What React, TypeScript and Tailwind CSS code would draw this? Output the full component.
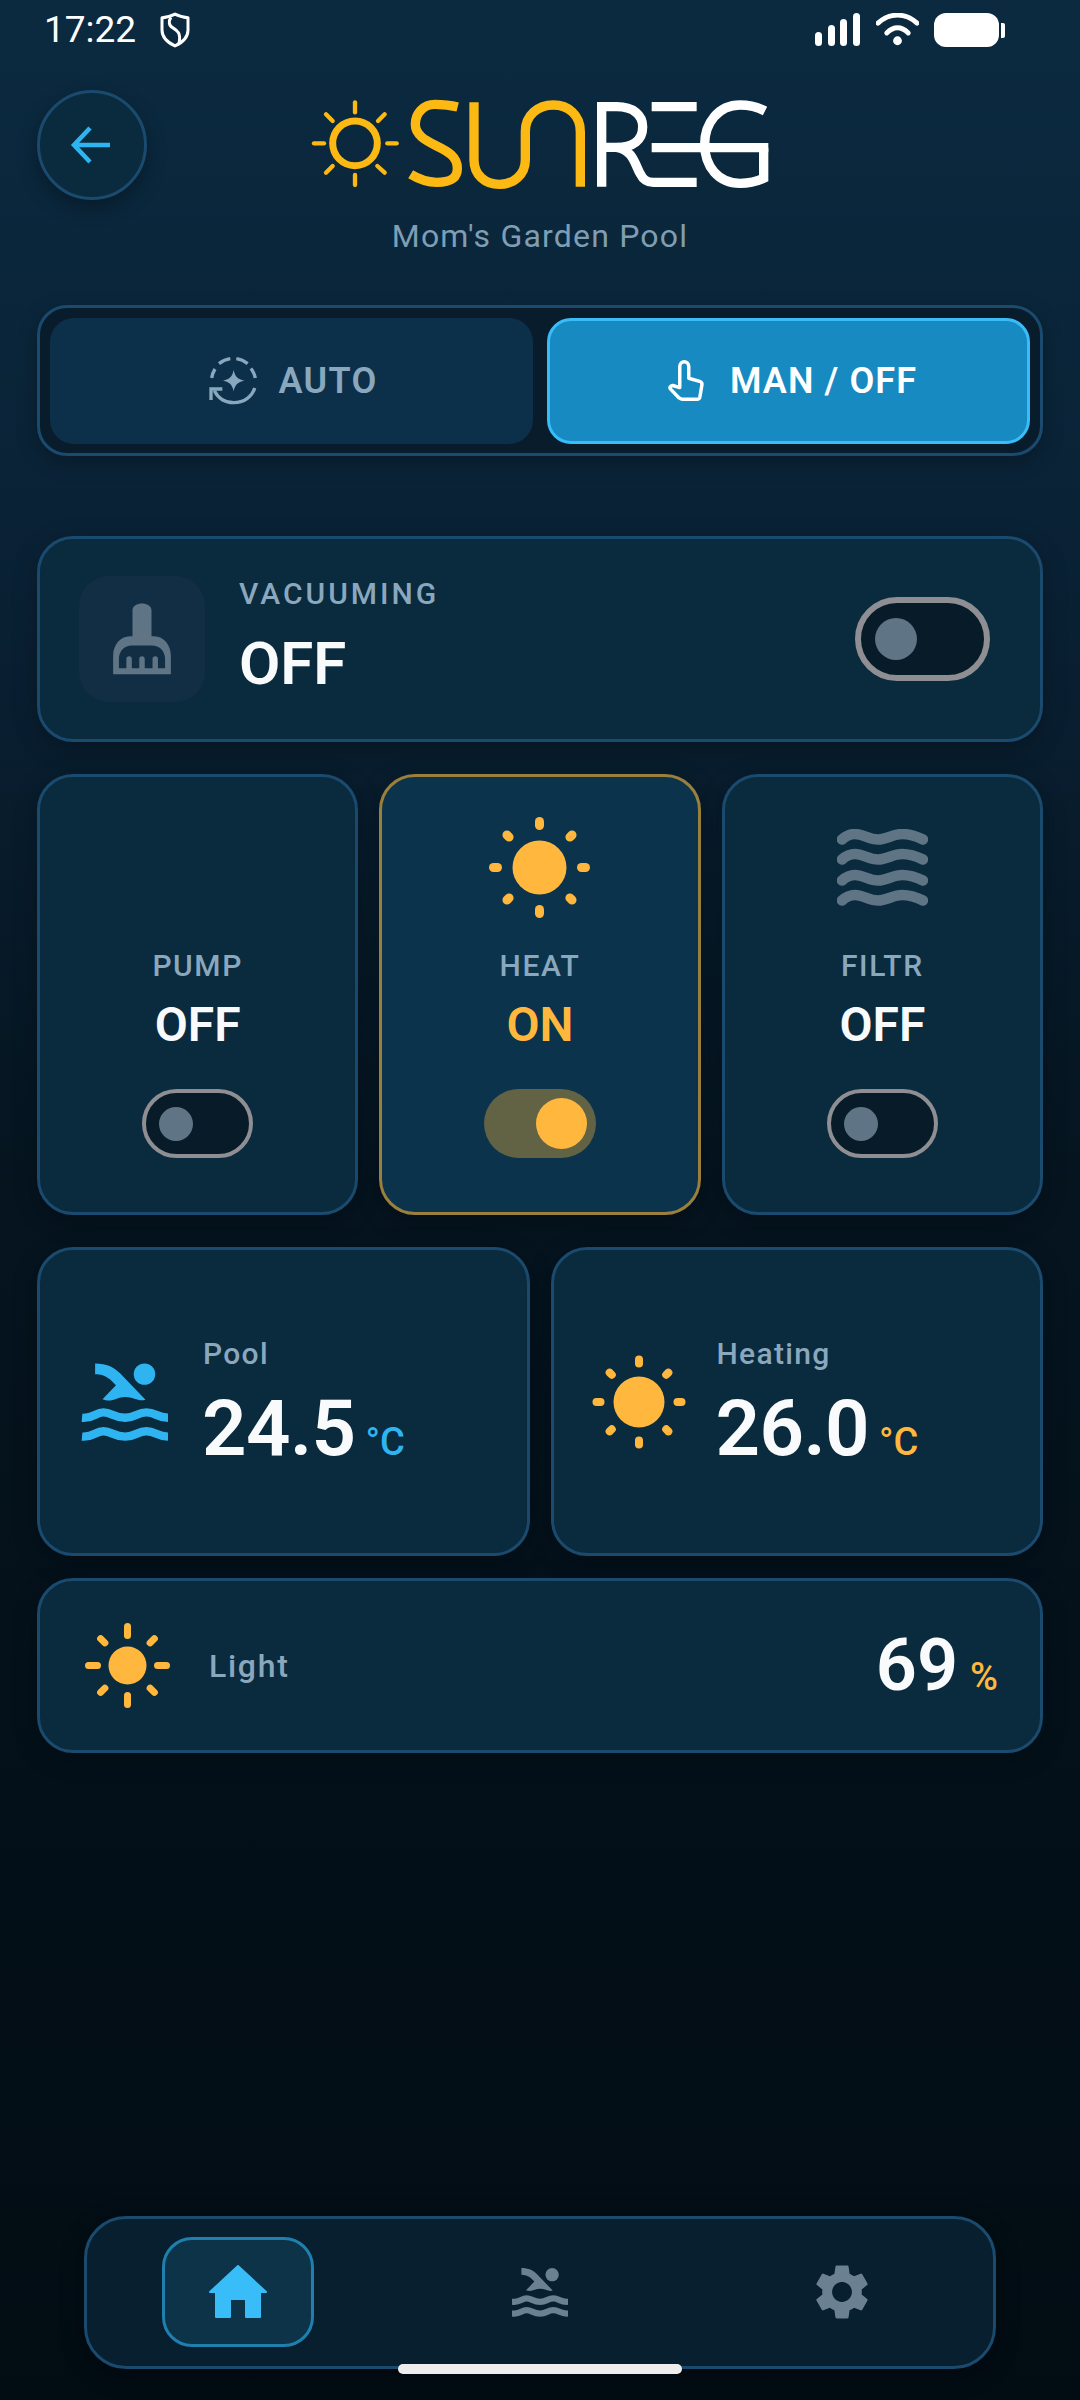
import React from "react";
import { MdSettings } from "react-icons/md";

const FONT = "font-['Roboto',sans-serif]";

function Sun({ w, r, cardinal, diag, sw, color = "#ffb83d" }: { w: number; r: number; cardinal: [number, number]; diag: [number, number]; sw: number; color?: string }) {
  const c = w / 2;
  const k = Math.SQRT1_2;
  const lines: [number, number, number, number][] = [
    [0, -1, 0, -1], [0, 1, 0, 1], [-1, 0, -1, 0], [1, 0, 1, 0],
  ];
  const dl: [number, number][] = [[k, k], [-k, k], [k, -k], [-k, -k]];
  return (
    <svg width={w} height={w} viewBox={`0 0 ${w} ${w}`} fill="none" className="shrink-0">
      <circle cx={c} cy={c} r={r} fill={color} />
      {lines.map((l, i) => (
        <line key={i} x1={c + l[0] * cardinal[0]} y1={c + l[1] * cardinal[0]} x2={c + l[0] * cardinal[1]} y2={c + l[1] * cardinal[1]} stroke={color} strokeWidth={sw} strokeLinecap="round" />
      ))}
      {dl.map((d, i) => (
        <line key={i} x1={c + d[0] * diag[0]} y1={c + d[1] * diag[0]} x2={c + d[0] * diag[1]} y2={c + d[1] * diag[1]} stroke={color} strokeWidth={sw} strokeLinecap="round" />
      ))}
    </svg>
  );
}

function Swim({ w, h, color, round }: { w: number; h: number; color: string; round?: boolean }) {
  const cap = round ? "round" : "butt";
  const sw = round ? 30 : 25;
  return (
    <svg width={w} height={h} viewBox="30 36 268 238" fill="none" className="shrink-0">
      <path d="M75 40 C110 40 130 50 150 70 L225 148 C205 155 190 140 165 140 C140 140 125 158 97 147 L137 105 L120 88 C105 75 90 72 75 72 Z" fill={color} />
      <circle cx="222" cy="72" r="32" fill={color} />
      <path d="M36 202 C70 205 75 186 100 186 C125 186 130 202 165 202 C195 202 200 186 228 186 C255 186 260 202 292 202" stroke={color} strokeWidth={sw} strokeLinecap={cap} />
      <path d="M36 258 C70 261 75 242 100 242 C125 242 130 258 165 258 C195 258 200 242 228 242 C255 242 260 258 292 258" stroke={color} strokeWidth={sw} strokeLinecap={cap} />
    </svg>
  );
}

function Logo() {
  const Y = "#fdb913";
  return (
    <svg width={480} height={120} viewBox="0 0 1440 360" fill="none">
      <g stroke={Y} strokeLinecap="round" strokeWidth="13">
        <line x1="165" y1="52" x2="165" y2="82" />
        <line x1="165" y1="270" x2="165" y2="300" />
        <line x1="42" y1="175" x2="72" y2="175" />
        <line x1="262" y1="175" x2="290" y2="175" />
        <line x1="78" y1="88" x2="98" y2="108" />
        <line x1="254" y1="88" x2="234" y2="108" />
        <line x1="78" y1="263" x2="98" y2="243" />
        <line x1="254" y1="263" x2="232" y2="243" />
      </g>
      <circle cx="165" cy="175" r="67" stroke={Y} strokeWidth="21" />
      <path d="M473 66 C450 60 425 58 405 58 C370 58 346 85 346 118 C346 150 375 165 410 183 C445 200 472 215 472 250 C472 285 445 292 410 292 C385 292 355 282 332 268" stroke={Y} strokeWidth="28" />
      <path d="M522 52 V225 C522 270 555 298 598 298 C640 298 676 270 676 225 V140 C676 90 715 60 760 60 C805 60 841 90 841 140 V305" stroke={Y} strokeWidth="28" />
      <g stroke="#ffffff" strokeWidth="28">
        <path d="M905 305 V65 H950 C1000 65 1028 90 1028 125 C1028 165 1000 187 950 187 H905" />
        <path d="M950 187 C1000 195 1005 240 1020 265 C1030 285 1040 292 1060 292 H1190" />
        <path d="M1055 65 H1190" />
        <path d="M1055 188 H1405" />
        <path d="M1395 78 C1370 65 1345 60 1320 60 C1255 60 1214 115 1214 178 C1214 245 1255 295 1320 295 C1345 295 1370 290 1391 280 V188" />
      </g>
    </svg>
  );
}

function AutoIcon() {
  const c = "#8aa8bd";
  return (
    <svg width={50} height={50} viewBox="53 48 150 150" fill="none" className="shrink-0">
      <g stroke={c} strokeWidth="10">
        <path d="M64 114 C66 102 69 95 74 87" />
        <path d="M86 71 C95 64 106 58 120 56" />
        <path d="M138 56 C151 58 162 63 172 71" />
        <path d="M182 85 C189 95 193 104 195 114" />
        <path d="M193 144 C186 170 160 188 130 188 C104 188 84 175 72 152" />
        <path d="M62 180 V147 H96" />
      </g>
      <path d="M130 90 C134 110 142 118 162 122 C142 126 134 134 130 154 C126 134 118 126 98 122 C118 118 126 110 130 90Z" fill={c} />
    </svg>
  );
}

function HandIcon() {
  return (
    <svg width={38} height={44} viewBox="53 60 110 126" fill="none" className="shrink-0">
      <path d="M90 82 C90 62 116 62 116 82 V115 L150 125 C154 127 155 130 154 135 L148 170 C147 175 144 176 140 176 H98 C94 176 92 175 88 172 L62 145 C60 142 62 138 70 136 L90 142 Z" stroke="#ffffff" strokeWidth="10" strokeLinejoin="round" />
    </svg>
  );
}

function BroomIcon() {
  return (
    <svg width={60} height={72} viewBox="98 70 174 212" className="shrink-0">
      <path
        fillRule="evenodd"
        fill="#5f7585"
        d="M157 92 C157 65 213 65 213 92 V168 H220 C250 168 270 195 270 225 V280 H100 V225 C100 195 120 168 150 168 H157 Z M117 262 V235 C117 210 135 195 155 195 H215 C235 195 253 210 253 235 V262 H232 V235 a8 8 0 0 0 -16 0 V262 H193 V235 a8 8 0 0 0 -16 0 V262 H155 V235 a8 8 0 0 0 -16 0 V262 Z"
      />
    </svg>
  );
}

function Waves() {
  const ys = [0, 20, 41, 61];
  return (
    <svg width={91} height={77} viewBox="0 0 91 77" fill="none">
      {ys.map((y) => (
        <path key={y} transform={`translate(0 ${y})`} d="M5 10.5 C10 6 14 5 18 5 C26 5 32 10.5 41 10.5 C50 10.5 56 5 65 5 C72 5 78 6.5 86 10.5" stroke="#5f7585" strokeWidth="10.5" strokeLinecap="round" />
      ))}
    </svg>
  );
}

function SmallToggle({ on }: { on?: boolean }) {
  if (on)
    return (
      <div className="w-[112px] h-[69px] rounded-full bg-[#626244] flex items-center justify-end pr-[9px]">
        <div className="w-[51px] h-[51px] rounded-full bg-[#ffb83d]" />
      </div>
    );
  return (
    <div className="w-[111px] h-[69px] rounded-full border-[4px] border-[#8e8e93] bg-[#071b29] flex items-center pl-[13px]">
      <div className="w-[34px] h-[34px] rounded-full bg-[#5f7585]" />
    </div>
  );
}

function MiniCard({ label, value, on, icon }: { label: string; value: string; on?: boolean; icon?: React.ReactNode }) {
  return (
    <div className={`h-[441px] rounded-[36px] border-[3px] flex flex-col items-center pt-[40px] shadow-[0_6px_24px_rgba(0,0,0,0.25)] ${on ? "bg-[#0c334c] border-[#9b7f3c]" : "bg-[#0a2a3e] border-[#1a4a6e]"}`}>
      <div className="h-[101px] flex items-center justify-center">{icon}</div>
      <div className="mt-[30px] h-[36px] leading-[36px] text-[30px] font-medium tracking-[1.6px] text-[#8aa8bd]">{label}</div>
      <div className={`mt-[13px] h-[56px] leading-[56px] text-[48px] font-semibold ${on ? "text-[#ffb83d]" : "text-[#f8fafc]"}`}>{value}</div>
      <div className="mt-[36px]"><SmallToggle on={on} /></div>
    </div>
  );
}

function TempCard({ icon, label, value, unit, unitColor, pad, gap }: { icon: React.ReactNode; label: string; value: string; unit: string; unitColor: string; pad: string; gap: string }) {
  return (
    <div className={`h-[309px] rounded-[36px] border-[3px] border-[#1a4a6e] bg-[#0a2a3e] flex items-center shadow-[0_6px_24px_rgba(0,0,0,0.25)] ${pad} ${gap}`}>
      {icon}
      <div className="flex flex-col">
        <div className="h-[34px] leading-[34px] text-[30px] font-medium tracking-[1.3px] text-[#8aa8bd]">{label}</div>
        <div className="mt-[20px] -ml-[1px] h-[76px] leading-[76px] flex items-baseline gap-[10px]">
          <span className="text-[78px] font-semibold text-[#f8fafc] tracking-[-0.6px]">{value}</span>
          <span className={`text-[38px] font-medium ${unitColor}`}>{unit}</span>
        </div>
      </div>
    </div>
  );
}

export default function App() {
  return (
    <div className={`relative w-[1080px] h-[2400px] overflow-hidden flex flex-col px-[37px] bg-[linear-gradient(180deg,#0b2a40_0%,#0a2236_22%,#05141f_50%,#020c13_100%)] ${FONT}`}>
      {/* status bar */}
      <div className="h-[60px] -mx-[37px] pl-[44px] pr-[75px] flex items-center justify-between text-white">
        <div className="flex items-center gap-[24px]">
          <span className="text-[37px] leading-[42px] font-normal">17:22</span>
          <svg width={30} height={36} viewBox="0 0 30 34" preserveAspectRatio="none" fill="none">
            <path d="M15 2 C19 4 24 5 28 5.5 V17 C28 24 22 29 15 32 C8 29 2 24 2 17 V5.5 C6 5 11 4 15 2Z" stroke="#fff" strokeWidth="3" strokeLinejoin="round" />
            <path d="M11 5 C8 9 9 13 13 15 C18 18 21 20 19 30" stroke="#fff" strokeWidth="3" />
          </svg>
        </div>
        <div className="flex items-center gap-[15px]">
          <svg width={46} height={34} viewBox="0 0 46 34">
            <rect x="0" y="19" width="7" height="14" rx="3.5" fill="#fff" />
            <rect x="13" y="12" width="7" height="21" rx="3.5" fill="#fff" />
            <rect x="25" y="6" width="7" height="27" rx="3.5" fill="#fff" />
            <rect x="38" y="0" width="7" height="33" rx="3.5" fill="#fff" />
          </svg>
          <svg width={43} height={34} viewBox="0 0 44 34" fill="none">
            <path d="M2 10 C14 -1 30 -1 42 10" stroke="#fff" strokeWidth="5" strokeLinecap="round" />
            <path d="M11 20 C18 13 26 13 33 20" stroke="#fff" strokeWidth="5" strokeLinecap="round" />
            <circle cx="22" cy="28" r="4.5" fill="#fff" />
          </svg>
          <div className="flex items-center gap-[2px]">
            <div className="w-[65px] h-[34px] rounded-[12px] bg-white" />
            <div className="w-[4px] h-[15px] rounded-r-[2px] bg-white" />
          </div>
        </div>
      </div>

      {/* header */}
      <div className="mt-[30px] flex items-start justify-between">
        <div className="w-[110px] h-[110px] rounded-full border-[3px] border-[#1a4a6e] bg-[#0a2a3e] flex items-center justify-center shadow-[0_8px_20px_rgba(0,0,0,0.3)]">
          <svg width={44} height={40} viewBox="0 0 44 40" fill="none">
            <path d="M40 20 H4 M20 3 L4 20 L20 37" stroke="#2fb4f2" strokeWidth="4.5" />
          </svg>
        </div>
        <div className="-mt-[5px] flex flex-col items-center">
          <Logo />
          <div className="mt-[13px] h-[36px] leading-[36px] text-[32px] tracking-[1.2px] text-[#7f9eb3]">Mom's Garden Pool</div>
        </div>
        <div className="w-[110px]" />
      </div>

      {/* mode */}
      <div className="mt-[51px] h-[151px] rounded-[30px] border-[3px] border-[#1a4a6e] bg-[#081c2b] px-[10px] grid grid-cols-2 items-center gap-[14px] shadow-[0_6px_20px_rgba(0,0,0,0.25)]">
        <div className="h-[126px] rounded-[24px] bg-[#0c304a] pl-[3px] flex items-center justify-center gap-[20px]">
          <AutoIcon />
          <span className="text-[36px] font-semibold tracking-[1.3px] text-[#8aa8bd]">AUTO</span>
        </div>
        <div className="h-[126px] rounded-[24px] bg-[#178ac2] border-[3px] border-[#38bdf8] pl-[7px] flex items-center justify-center gap-[25px]">
          <HandIcon />
          <span className="text-[36px] font-semibold tracking-[1.1px] text-white">MAN / OFF</span>
        </div>
      </div>

      {/* vacuum */}
      <div className="mt-[80px] h-[206px] rounded-[36px] border-[3px] border-[#1a4a6e] bg-[#0a2a3e] pl-[39px] pr-[50px] flex items-center shadow-[0_6px_24px_rgba(0,0,0,0.25)]">
        <div className="w-[126px] h-[126px] rounded-[30px] bg-[#122e44] flex items-center justify-center">
          <BroomIcon />
        </div>
        <div className="ml-[34px] mb-[4px] flex flex-col">
          <div className="h-[36px] leading-[36px] text-[30px] font-medium tracking-[3px] text-[#8aa8bd]">VACUUMING</div>
          <div className="mt-[17px] h-[70px] leading-[70px] text-[60px] font-semibold text-[#f8fafc]">OFF</div>
        </div>
        <div className="ml-auto w-[135px] h-[84px] rounded-full border-[6px] border-[#8e8e93] bg-[#071b29] flex items-center pl-[14px]">
          <div className="w-[42px] h-[42px] rounded-full bg-[#5f7585]" />
        </div>
      </div>

      {/* controls */}
      <div className="mt-[32px] grid grid-cols-3 gap-[21px]">
        <MiniCard label="PUMP" value="OFF" />
        <MiniCard label="HEAT" value="ON" on icon={<Sun w={101} r={27} cardinal={[42, 46]} diag={[43, 46]} sw={9} />} />
        <MiniCard label="FILTR" value="OFF" icon={<Waves />} />
      </div>

      {/* temps */}
      <div className="mt-[32px] grid grid-cols-2 gap-[21px]">
        <TempCard icon={<Swim w={90} h={80} color="#2fb4f2" />} label="Pool" value="24.5" unit="°C" unitColor="text-[#2fb4f2]" pad="pl-[40px]" gap="gap-[33px]" />
        <TempCard icon={<Sun w={94} r={25.5} cardinal={[38.5, 42.5]} diag={[38.5, 41.5]} sw={8} />} label="Heating" value="26.0" unit="°C" unitColor="text-[#ffb83d]" pad="pl-[38px]" gap="gap-[31px]" />
      </div>

      {/* light */}
      <div className="mt-[22px] h-[175px] rounded-[36px] border-[3px] border-[#1a4a6e] bg-[#0a2a3e] pl-[45px] pr-[42px] flex items-center shadow-[0_6px_24px_rgba(0,0,0,0.25)]">
        <Sun w={85} r={19} cardinal={[30, 39]} diag={[32, 38]} sw={7} />
        <span className="ml-[39px] text-[32px] font-medium tracking-[1.7px] text-[#8aa8bd]">Light</span>
        <div className="ml-auto flex items-baseline gap-[12px]">
          <span className="text-[72px] font-semibold text-[#f8fafc]">69</span>
          <span className="text-[38px] font-medium text-[#ffb83d]">%</span>
        </div>
      </div>

      {/* nav */}
      <div className="mt-auto mb-[31px] mx-[47px] h-[153px] rounded-[42px] border-[3px] border-[#1a4a6e] bg-[#071f2e] grid grid-cols-3 pt-[18px] shadow-[0_6px_24px_rgba(0,0,0,0.3)]">
        <div className="flex justify-center">
          <div className="w-[152px] h-[110px] rounded-[30px] border-[3px] border-[#1f7fae] bg-[#0c3348] flex items-center justify-center">
            <svg width={60} height={54} viewBox="0 0 60 54">
              <path d="M30 1 L58 27 H52 V52 H38 V34 H22 V52 H8 V27 H2 Z" fill="#38bdf8" stroke="#38bdf8" strokeWidth="2" strokeLinejoin="round" />
            </svg>
          </div>
        </div>
        <div className="flex justify-center items-center h-[110px]">
          <Swim w={56} h={52} color="#6b8090" round />
        </div>
        <div className="flex justify-center items-center h-[110px]">
          <MdSettings size={66} color="#6b8090" />
        </div>
      </div>

      <div className="absolute left-[398px] top-[2364px] w-[284px] h-[10px] rounded-full bg-[#eeeeee]" />
    </div>
  );
}
